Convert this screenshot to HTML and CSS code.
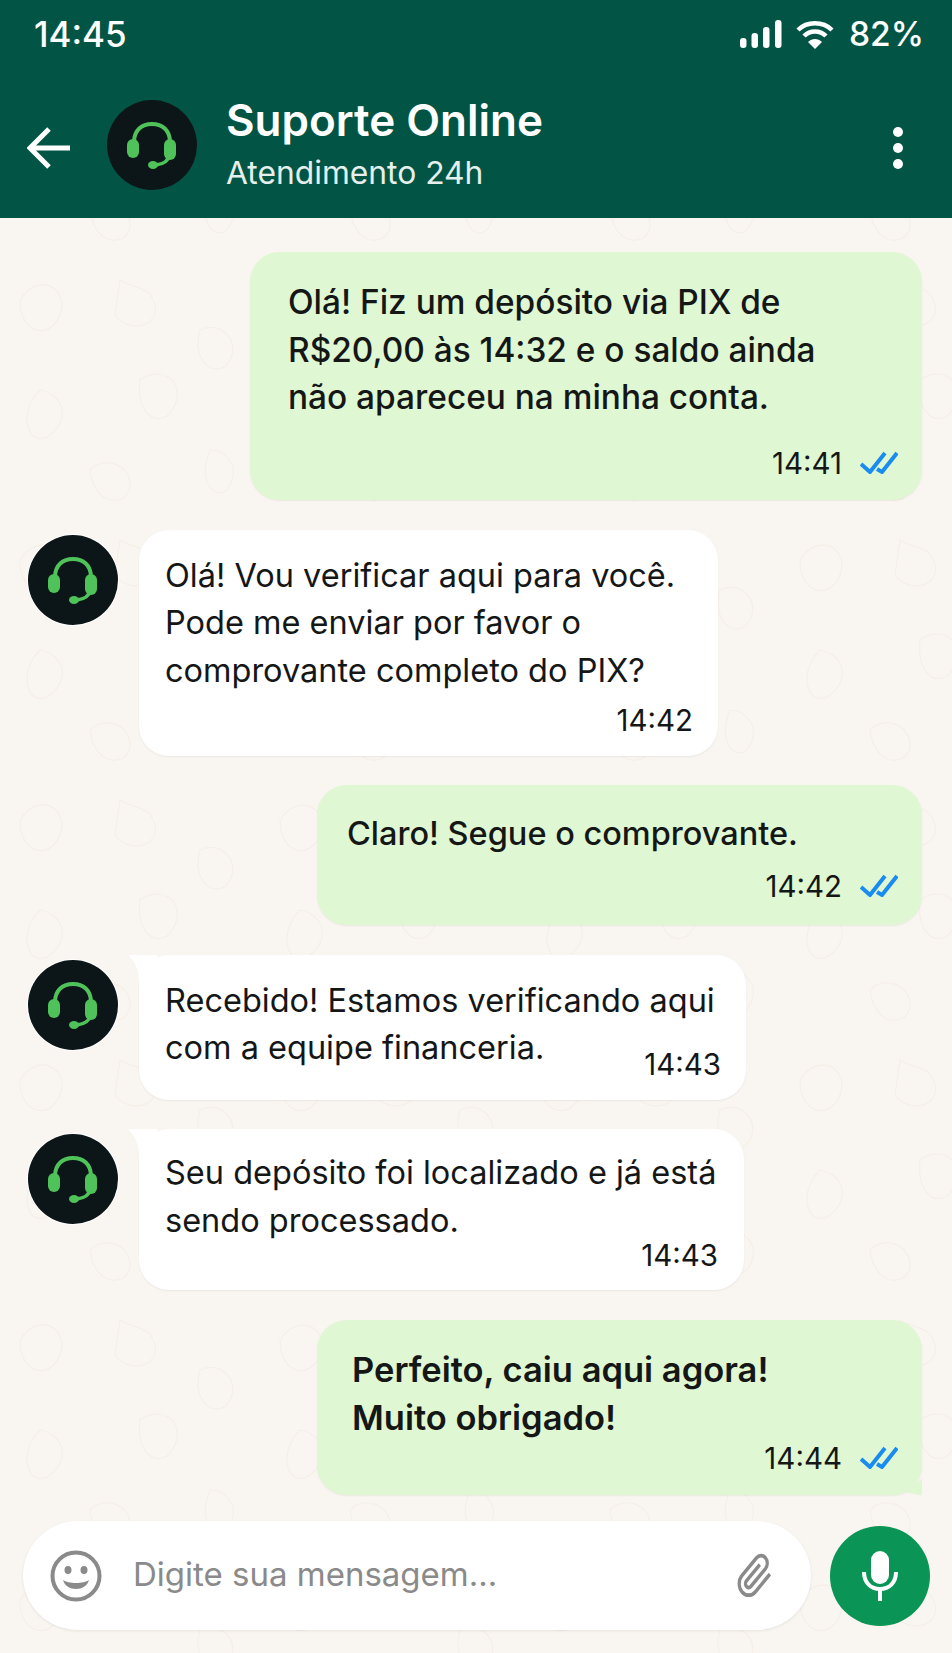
FILE: index.html
```html
<!DOCTYPE html>
<html lang="pt-BR">
<head>
  <meta charset="UTF-8">
  <meta name="viewport" content="width=device-width, initial-scale=1.0">
  <title>Suporte Online</title>
  <link rel="stylesheet" href="styles.css">
</head>
<body>
  <svg class="defs" width="0" height="0">
    <symbol id="headset" viewBox="0 0 90 90">
      <path d="M27 42C27 30 35 24 45 24C55 24 63 30 63 42" fill="none" stroke="#4fc35a" stroke-width="4"/>
      <rect x="20" y="39" width="12" height="19" rx="6" fill="#4fc35a"/>
      <rect x="57" y="39" width="12" height="21" rx="6" fill="#4fc35a"/>
      <path d="M62 56C61 62 56 64 49 65" fill="none" stroke="#4fc35a" stroke-width="3.5"/>
      <ellipse cx="46" cy="65" rx="5" ry="4" fill="#4fc35a"/>
    </symbol>
    <symbol id="ticks" viewBox="0 0 38 23">
      <path d="M1 13L10 21L25 2M17 18L22 21L37 2" fill="none" stroke="#1a8cf0" stroke-width="4"/>
    </symbol>
  </svg>

  <header class="topbar">
    <div class="status">
      <span class="clock">14:45</span>
      <div class="status-icons">
        <svg class="signal" viewBox="0 0 42 28" fill="#fff">
          <rect x="0" y="18" width="6.5" height="10" rx="3"/>
          <rect x="11.5" y="13" width="6.5" height="15" rx="3"/>
          <rect x="23" y="7" width="6.5" height="21" rx="3"/>
          <rect x="35" y="0" width="6.5" height="28" rx="3"/>
        </svg>
        <svg class="wifi" viewBox="0 0 38 29" fill="none" stroke="#fff" stroke-width="4.5">
          <path d="M2 10C11 1 27 1 36 10"/>
          <path d="M8 16C14 10 24 10 30 16"/>
          <path d="M19 29L12 22C16 18 22 18 26 22Z" fill="#fff" stroke="none"/>
        </svg>
        <span class="battery">82%</span>
      </div>
    </div>
    <div class="contact">
      <svg class="back" viewBox="0 0 44 42" fill="none" stroke="#fff" stroke-width="5">
        <path d="M22 2L3 21L22 40M3 21H43"/>
      </svg>
      <svg class="avatar"><use href="#headset"/></svg>
      <div class="contact-info">
        <div class="contact-name">Suporte Online</div>
        <div class="contact-sub">Atendimento 24h</div>
      </div>
      <div class="menu"><i></i><i></i><i></i></div>
    </div>
  </header>

  <main class="chat">
    <div class="bubble out medium b1">
      <p>Olá! Fiz um depósito via PIX de<br>R$20,00 às 14:32 e o saldo ainda<br>não apareceu na minha conta.</p>
      <div class="meta"><span class="time">14:41</span><svg class="check"><use href="#ticks"/></svg></div>
    </div>

    <div class="row">
      <svg class="avatar"><use href="#headset"/></svg>
      <div class="bubble in b2">
        <p>Olá! Vou verificar aqui para você.<br>Pode me enviar por favor o<br>comprovante completo do PIX?</p>
        <div class="meta"><span class="time">14:42</span></div>
      </div>
    </div>

    <div class="bubble out medium b3">
      <p>Claro! Segue o comprovante.</p>
      <div class="meta"><span class="time">14:42</span><svg class="check"><use href="#ticks"/></svg></div>
    </div>

    <div class="row">
      <svg class="avatar"><use href="#headset"/></svg>
      <div class="bubble in tail-in b4">
        <p>Recebido! Estamos verificando aqui<br>com a equipe financeria.</p>
        <div class="meta"><span class="time">14:43</span></div>
      </div>
    </div>

    <div class="row">
      <svg class="avatar"><use href="#headset"/></svg>
      <div class="bubble in tail-in b5">
        <p>Seu depósito foi localizado e já está<br>sendo processado.</p>
        <div class="meta"><span class="time">14:43</span></div>
      </div>
    </div>

    <div class="bubble out semibold tail-out b6">
      <p>Perfeito, caiu aqui agora!<br>Muito obrigado!</p>
      <div class="meta"><span class="time">14:44</span><svg class="check"><use href="#ticks"/></svg></div>
    </div>
  </main>

  <footer class="composer">
    <div class="input">
      <svg class="smiley" viewBox="0 0 52 52">
        <circle cx="26" cy="26" r="23.5" fill="none" stroke="#8a8a8a" stroke-width="4"/>
        <ellipse cx="18" cy="20" rx="3.5" ry="4" fill="#8a8a8a"/>
        <ellipse cx="34" cy="20" rx="3.5" ry="4" fill="#8a8a8a"/>
        <path d="M13 30C18 34 34 34 39 30C36 42 16 42 13 30Z" fill="#8a8a8a"/>
      </svg>
      <span class="placeholder">Digite sua mensagem...</span>
      <svg class="clip" viewBox="0 0 24 24" preserveAspectRatio="none" fill="none" stroke="#8a8a8a" stroke-width="2">
        <path d="M21.44 11.05l-9.19 9.19a6 6 0 0 1-8.49-8.49l9.19-9.19a4 4 0 0 1 5.66 5.66l-9.2 9.19a2 2 0 0 1-2.83-2.83l8.49-8.48"/>
      </svg>
    </div>
    <div class="mic">
      <svg viewBox="0 0 36 50" fill="none" stroke="#fff" stroke-width="4">
        <rect x="9" y="0" width="18" height="33" rx="9" fill="#fff" stroke="none"/>
        <path d="M2 21C2 32 9 38 18 38C27 38 34 32 34 21"/>
        <path d="M18 38V50"/>
      </svg>
    </div>
  </footer>
</body>
</html>
```

FILE: styles.css
```css
* {
  box-sizing: border-box;
}

body {
  margin: 0;
  width: 952px;
  height: 1653px;
  overflow: hidden;
  display: flex;
  flex-direction: column;
  font-family: 'Inter', 'Liberation Sans', sans-serif;
  color: #141716;
  background-color: #f9f5f0;
  background-image: url("data:image/svg+xml,%3Csvg xmlns='http://www.w3.org/2000/svg' width='260' height='260' fill='none' stroke='%23f5efe8' stroke-width='1.2'%3E%3Cpath d='M20 40c20-30 50-10 40 15s-40 20-40-15zM120 20c15 10 30 5 35 25s-25 30-40 10zM200 70c20-10 40 10 30 30s-40 5-30-30zM40 130c25 5 30 30 10 45s-35-20-10-45zM140 120c20-15 45 0 35 25s-40 15-35-25zM90 210c15-15 40-5 40 15s-35 25-40-15zM210 190c15 0 30 15 20 35s-35 0-20-35z'/%3E%3C/svg%3E");
}

p {
  margin: 0;
  white-space: nowrap;
}

.defs {
  position: absolute;
}

/* top bar */
.topbar {
  height: 218px;
  flex-shrink: 0;
  background: #025545;
  color: #fff;
}

.status {
  height: 68px;
  padding: 0 28px 0 34px;
  display: flex;
  align-items: center;
  justify-content: space-between;
}

.clock {
  font-size: 35px;
  font-weight: 500;
}

.battery {
  font-size: 33.5px;
  font-weight: 500;
}

.status-icons {
  display: flex;
  align-items: center;
}

.signal {
  width: 42px;
  height: 28px;
  margin-right: 14px;
}

.wifi {
  width: 38px;
  height: 29px;
  margin-right: 15px;
}

.contact {
  height: 124px;
  padding: 30px 49px 0 27px;
  display: flex;
  align-items: center;
}

.back {
  width: 44px;
  height: 42px;
  margin: 6px 36px 0 0;
  flex-shrink: 0;
}

.avatar {
  width: 90px;
  height: 90px;
  flex-shrink: 0;
  border-radius: 50%;
  background: #0c1518;
}

.contact .avatar {
  margin-right: 29px;
}

.contact-name {
  font-size: 44px;
  font-weight: 600;
  line-height: 46px;
}

.contact-sub {
  margin-top: 10px;
  font-size: 31.8px;
  line-height: 40px;
  color: #e6efec;
}

.menu {
  margin: 6px 0 0 auto;
  display: flex;
  flex-direction: column;
  gap: 6px;
}

.menu i {
  width: 10px;
  height: 10px;
  border-radius: 50%;
  background: #fff;
}

/* messages */
.chat {
  padding: 34px 30px 0 28px;
  display: flex;
  flex-direction: column;
  gap: 29.5px;
}

.row {
  display: flex;
  align-items: flex-start;
  gap: 21px;
}

.row .avatar {
  margin-top: 5px;
  box-shadow: 0 0 0 1px #fff;
}

.bubble {
  position: relative;
  border-radius: 30px;
  font-size: 32.5px;
  line-height: 47.5px;
  box-shadow: 0 1px 2px rgba(0, 0, 0, 0.06);
}

.out {
  align-self: flex-end;
  background: #e0f7d3;
}

.in {
  background: #fff;
}

.medium {
  font-weight: 500;
}

.semibold {
  font-weight: 600;
}

.tail-in::before {
  content: "";
  position: absolute;
  top: 0;
  left: -12px;
  width: 30px;
  height: 30px;
  background: #fff;
  clip-path: path("M0 0H30V30H12C12 14 8 6 0 0Z");
}

.tail-out::after {
  content: "";
  position: absolute;
  right: 0;
  bottom: -1px;
  width: 16px;
  height: 17px;
  background: #e0f7d3;
  clip-path: path("M16 17L0 14L16 0Z");
}

.meta {
  position: relative;
  z-index: 1;
  height: 36px;
  display: flex;
  align-items: center;
  justify-content: flex-end;
  font-weight: 400;
}

.time {
  font-size: 29.5px;
  line-height: 36px;
}

.check {
  width: 38px;
  height: 23px;
  margin-left: 18px;
}

/* one block per message, the sizes differ from bubble to bubble */
.b1 {
  width: 672px;
  padding: 27px 24px 19.5px 38px;
  font-size: 33.4px;
}

.b1 .meta {
  margin-top: 23px;
}

.b2 {
  width: 579px;
  padding: 22px 25px 17.5px 26px;
}

.b2 .meta {
  margin-top: 8px;
}

.b3 {
  width: 605px;
  padding: 25px 24px 21.5px 30px;
}

.b3 .meta {
  margin-top: 10px;
}

.b4 {
  width: 607px;
  padding: 22px 25px 18px 26px;
}

.b4 .meta {
  margin-top: -26px;
}

.b5 {
  width: 605px;
  padding: 20px 26px 17px 26px;
}

.b5 .meta {
  margin-top: -7px;
}

.b6 {
  width: 605px;
  padding: 26px 24px 19px 35px;
  font-size: 34.5px;
  line-height: 48.5px;
}

.b6 .meta {
  margin-top: -3px;
}

/* bottom input */
.composer {
  margin-top: auto;
  padding: 0 22px 23px 23px;
  display: flex;
  align-items: center;
  gap: 19px;
  flex-shrink: 0;
}

.input {
  flex: 1;
  height: 109px;
  padding: 0 37px 0 27px;
  display: flex;
  align-items: center;
  background: #fff;
  border-radius: 55px;
  box-shadow: 0 1px 3px rgba(0, 0, 0, 0.08);
}

.smiley {
  width: 52px;
  height: 52px;
  margin-right: 31px;
}

.placeholder {
  margin-bottom: 3px;
  font-size: 33px;
  color: #8a8a8a;
}

.clip {
  width: 38px;
  height: 46px;
  margin-left: auto;
}

.mic {
  width: 100px;
  height: 100px;
  display: flex;
  align-items: center;
  justify-content: center;
  border-radius: 50%;
  background: #0a9455;
}

.mic svg {
  width: 36px;
  height: 50px;
}
```
